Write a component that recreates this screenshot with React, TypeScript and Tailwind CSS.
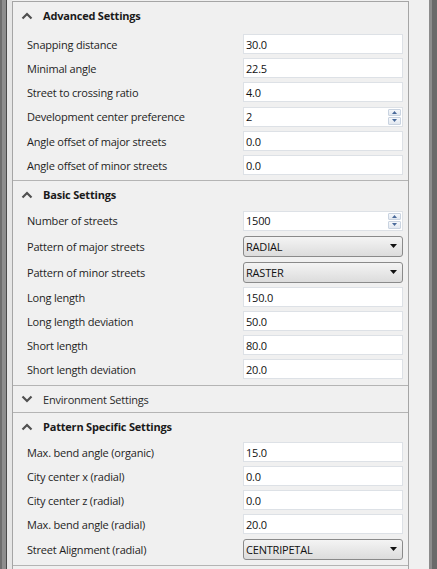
import React from "react";

type Row =
  | { kind: "text"; label: string; value: string }
  | { kind: "spin"; label: string; value: string }
  | { kind: "combo"; label: string; value: string };

const advanced: Row[] = [
  { kind: "text", label: "Snapping distance", value: "30.0" },
  { kind: "text", label: "Minimal angle", value: "22.5" },
  { kind: "text", label: "Street to crossing ratio", value: "4.0" },
  { kind: "spin", label: "Development center preference", value: "2" },
  { kind: "text", label: "Angle offset of major streets", value: "0.0" },
  { kind: "text", label: "Angle offset of minor streets", value: "0.0" },
];

const basic: Row[] = [
  { kind: "spin", label: "Number of streets", value: "1500" },
  { kind: "combo", label: "Pattern of major streets", value: "RADIAL" },
  { kind: "combo", label: "Pattern of minor streets", value: "RASTER" },
  { kind: "text", label: "Long length", value: "150.0" },
  { kind: "text", label: "Long length deviation", value: "50.0" },
  { kind: "text", label: "Short length", value: "80.0" },
  { kind: "text", label: "Short length deviation", value: "20.0" },
];

const pattern: Row[] = [
  { kind: "text", label: "Max. bend angle (organic)", value: "15.0" },
  { kind: "text", label: "City center x (radial)", value: "0.0" },
  { kind: "text", label: "City center z (radial)", value: "0.0" },
  { kind: "text", label: "Max. bend angle (radial)", value: "20.0" },
  { kind: "combo", label: "Street Alignment (radial)", value: "CENTRIPETAL" },
];

function Chevron({ up }: { up: boolean }) {
  return (
    <svg width="12" height="8" viewBox="0 0 12 8" className="shrink-0">
      <polyline
        points={up ? "1.5,6.5 6,2 10.5,6.5" : "1.5,1.5 6,6 10.5,1.5"}
        fill="none"
        stroke="#505050"
        strokeWidth="2.2"
      />
    </svg>
  );
}

function Header({ title, open }: { title: string; open: boolean }) {
  return (
    <div className="flex h-[27px] items-center gap-[10px] pl-[8px]">
      <Chevron up={open} />
      <span
        className={
          open ? "font-bold text-[#1a1a1a]" : "font-normal text-[#2a2a2a]"
        }
      >
        {title}
      </span>
    </div>
  );
}

function Field({ row }: { row: Row }) {
  if (row.kind === "combo") {
    return (
      <div className="flex h-[21px] w-[160px] items-center justify-between rounded-[3px] border border-[#8a8a8a] bg-gradient-to-b from-[#f4f4f4] to-[#dcdcdc] pl-[2px] pr-[5px]">
        <span>{row.value}</span>
        <svg width="7" height="4" viewBox="0 0 7 4">
          <polygon points="0,0 7,0 3.5,4" fill="#111" />
        </svg>
      </div>
    );
  }
  return (
    <div className="flex h-[20px] w-[160px] items-center justify-between border border-[#dde1e6] bg-white pl-[2px] pr-[1px]">
      <span>{row.value}</span>
      {row.kind === "spin" && (
        <div className="flex h-[16px] w-[13px] flex-col gap-[1px]">
          <div className="flex flex-1 items-center justify-center rounded-[1px] border border-[#c9d3e0] bg-gradient-to-b from-[#f6f8fb] to-[#e2e8f0]">
            <svg width="5" height="3" viewBox="0 0 5 3">
              <polygon points="0,3 5,3 2.5,0" fill="#4a6a9a" />
            </svg>
          </div>
          <div className="flex flex-1 items-center justify-center rounded-[1px] border border-[#c9d3e0] bg-gradient-to-b from-[#f6f8fb] to-[#e2e8f0]">
            <svg width="5" height="3" viewBox="0 0 5 3">
              <polygon points="0,0 5,0 2.5,3" fill="#4a6a9a" />
            </svg>
          </div>
        </div>
      )}
    </div>
  );
}

function Rows({ rows }: { rows: Row[] }) {
  return (
    <div className="flex flex-col">
      {rows.map((row) => (
        <div
          key={row.label}
          className={`flex items-center justify-between pl-[14px] pr-[5px] ${
            row.kind === "combo"
              ? "h-[26px]"
              : row.kind === "spin"
                ? "h-[25px]"
                : "h-[24px]"
          }`}
        >
          <span className="text-[#1e1e1e]">{row.label}</span>
          <Field row={row} />
        </div>
      ))}
    </div>
  );
}

export default function App() {
  return (
    <div
      className="flex h-[569px] w-[437px] overflow-hidden bg-[#f0f0f0] text-[11px] leading-none tracking-[-0.2px] text-[#111]"
      style={{ fontFamily: '"Open Sans", "Liberation Sans", sans-serif' }}
    >
      {/* left window edge */}
      <div className="flex w-[12px] shrink-0">
        <div className="w-[2px] bg-[#6e6e6e]" />
        <div className="w-[4px] bg-[#8e8e8e]" />
        <div className="w-[1px] bg-[#4a4a4a]" />
        <div className="w-[5px] bg-[#e6e6e6]" />
      </div>

      {/* settings panel */}
      <div className="mt-[1px] flex h-[600px] w-[397px] shrink-0 flex-col border-l border-r border-t border-[#a5a5a5]">
        <Header title="Advanced Settings" open />
        <div className="pt-[3px] pb-[3px]">
          <Rows rows={advanced} />
        </div>
        <div className="h-[1px] bg-[#b4b4b4]" />
        <Header title="Basic Settings" open />
        <div className="pb-[4px]">
          <Rows rows={basic} />
        </div>
        <div className="h-[1px] bg-[#b4b4b4]" />
        <div className="flex h-[26px] items-center gap-[10px] pl-[8px]">
          <Chevron up={false} />
          <span className="text-[#2a2a2a]">Environment Settings</span>
        </div>
        <div className="h-[1px] bg-[#b4b4b4]" />
        <Header title="Pattern Specific Settings" open />
        <div className="pb-[3px]">
          <Rows rows={pattern} />
        </div>
        <div className="h-[1px] bg-[#b4b4b4]" />
      </div>

      {/* right margin and scroll edge */}
      <div className="w-[20px] shrink-0" />
      <div className="w-[3px] shrink-0 bg-[#8c8c8c]" />
      <div className="w-[5px] shrink-0 bg-[#6a6a6a]" />
    </div>
  );
}
